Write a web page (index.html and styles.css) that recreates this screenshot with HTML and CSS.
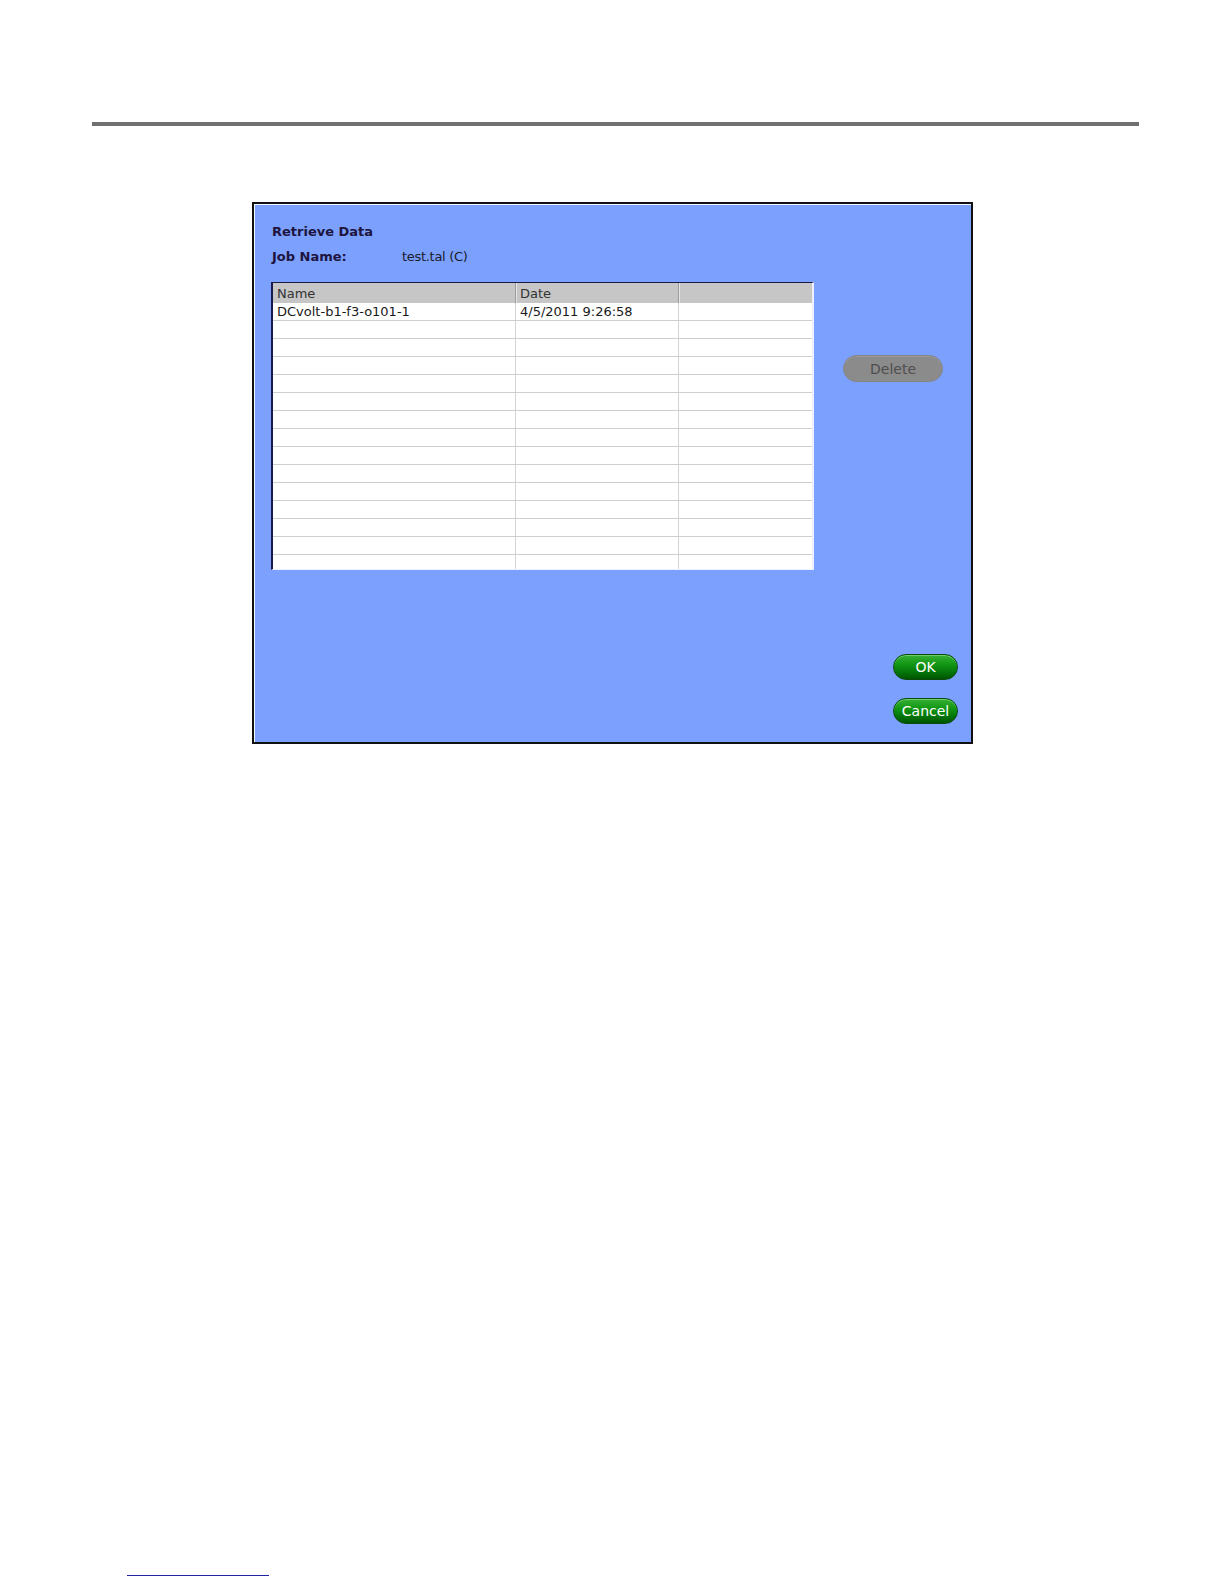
FILE: index.html
```html
<!DOCTYPE html>
<html>
<head>
<meta charset="utf-8">
<title>Retrieve Data</title>
<link rel="stylesheet" href="styles.css">
</head>
<body>
<div class="page">
  <div class="rule"></div>
  <div class="dialog">
    <div class="title">Retrieve Data</div>
    <div class="job">
      <span class="job-label">Job Name:</span>
      <span class="job-value">test.tal (C)</span>
    </div>
    <div class="main">
      <div class="grid-wrap">
        <div class="row head">
          <div class="cell">Name</div>
          <div class="cell">Date</div>
          <div class="cell"></div>
        </div>
        <div class="row"><div class="cell">DCvolt-b1-f3-o101-1</div><div class="cell">4/5/2011 9:26:58</div><div class="cell"></div></div>
        <div class="row"><div class="cell"></div><div class="cell"></div><div class="cell"></div></div>
        <div class="row"><div class="cell"></div><div class="cell"></div><div class="cell"></div></div>
        <div class="row"><div class="cell"></div><div class="cell"></div><div class="cell"></div></div>
        <div class="row"><div class="cell"></div><div class="cell"></div><div class="cell"></div></div>
        <div class="row"><div class="cell"></div><div class="cell"></div><div class="cell"></div></div>
        <div class="row"><div class="cell"></div><div class="cell"></div><div class="cell"></div></div>
        <div class="row"><div class="cell"></div><div class="cell"></div><div class="cell"></div></div>
        <div class="row"><div class="cell"></div><div class="cell"></div><div class="cell"></div></div>
        <div class="row"><div class="cell"></div><div class="cell"></div><div class="cell"></div></div>
        <div class="row"><div class="cell"></div><div class="cell"></div><div class="cell"></div></div>
        <div class="row"><div class="cell"></div><div class="cell"></div><div class="cell"></div></div>
        <div class="row"><div class="cell"></div><div class="cell"></div><div class="cell"></div></div>
        <div class="row"><div class="cell"></div><div class="cell"></div><div class="cell"></div></div>
        <div class="row"><div class="cell"></div><div class="cell"></div><div class="cell"></div></div>
      </div>
      <div class="side">
        <button class="btn btn-disabled">Delete</button>
      </div>
    </div>
    <div class="actions">
      <button class="btn btn-green">OK</button>
      <button class="btn btn-green">Cancel</button>
    </div>
  </div>
  <div class="footer-line"></div>
</div>
</body>
</html>
```

FILE: styles.css
```css
html, body {
  margin: 0;
  padding: 0;
  background: #ffffff;
}

body {
  font-family: "DejaVu Sans", Verdana, sans-serif;
  width: 1224px;
  height: 1584px;
  overflow: hidden;
}

.page {
  display: flex;
  flex-direction: column;
  padding-top: 122px;
}

.rule {
  margin-left: 92px;
  width: 1047px;
  height: 4px;
  background: #707070;
}

.dialog {
  margin-top: 76px;
  margin-left: 252px;
  width: 721px;
  height: 542px;
  box-sizing: border-box;
  border: 2px solid #111111;
  box-shadow: inset 1px 1px 0 #f4f7ff;
  background: #7ba0fe;
  padding: 20px 13px 18px 18px;
  display: flex;
  flex-direction: column;
}

.title {
  font-size: 13px;
  font-weight: bold;
  line-height: 16px;
  color: #1e1440;
}

.job {
  margin-top: 9px;
  display: flex;
  font-size: 13px;
  line-height: 16px;
}

.job-label {
  width: 130px;
  font-weight: bold;
  color: #1e1440;
}

.job-value {
  color: #1c1c2c;
  letter-spacing: -0.3px;
}

.main {
  margin-top: 17px;
  margin-left: -1px;
  display: flex;
  align-items: flex-start;
}

.grid-wrap {
  width: 543px;
  height: 288px;
  box-sizing: border-box;
  background: #ffffff;
  border-left: 2px solid #1a1a4a;
  border-top: 1px solid #1a1a4a;
  border-right: 2px solid #eef2ff;
  border-bottom: 1px solid #eef2ff;
  overflow: hidden;
}

.row {
  display: grid;
  grid-template-columns: 243px 163px 133px;
  height: 18px;
}

.cell {
  box-sizing: border-box;
  height: 18px;
  border-bottom: 1px solid #cfcfcf;
  border-right: 1px solid #d4d4d4;
  padding-left: 4px;
  font-size: 13px;
  line-height: 17px;
  color: #1a1a1a;
  white-space: nowrap;
}

.cell:last-child {
  border-right: none;
}

.row.head {
  height: 20px;
  background: #c6c6c6;
}

.row.head .cell {
  height: 20px;
  line-height: 20px;
  padding-top: 1px;
  border-bottom: none;
  border-right: 1px solid #9c9c9c;
  box-shadow: inset 1px 0 0 #e6e6e6;
  color: #333333;
}

.row.head .cell:first-child {
  box-shadow: none;
}

.row.head .cell:last-child {
  border-right: none;
}

.side {
  margin-left: 29px;
  padding-top: 73px;
}

.btn {
  font-family: "DejaVu Sans", Verdana, sans-serif;
  font-size: 14px;
  border-radius: 14px;
  padding: 0;
  cursor: default;
  display: flex;
  align-items: center;
  justify-content: center;
}

.btn-disabled {
  width: 100px;
  height: 27px;
  background: #8b8b8b;
  border: 1px solid #858585;
  color: #4f4f4f;
  box-shadow: inset 0 1px 0 #9a9a9a;
}

.actions {
  margin-top: auto;
  align-self: flex-end;
  display: flex;
  flex-direction: column;
  gap: 18px;
}

.btn-green {
  width: 65px;
  height: 26px;
  color: #ffffff;
  border: 1px solid #0a4a0a;
  background: linear-gradient(to bottom, #38b038 0%, #169a16 35%, #04780a 70%, #005400 100%);
  box-shadow: inset 0 1px 0 #6ccf6c;
}

.footer-line {
  margin-top: 831px;
  margin-left: 127px;
  width: 142px;
  height: 1px;
  background: #2323a8;
}
```
